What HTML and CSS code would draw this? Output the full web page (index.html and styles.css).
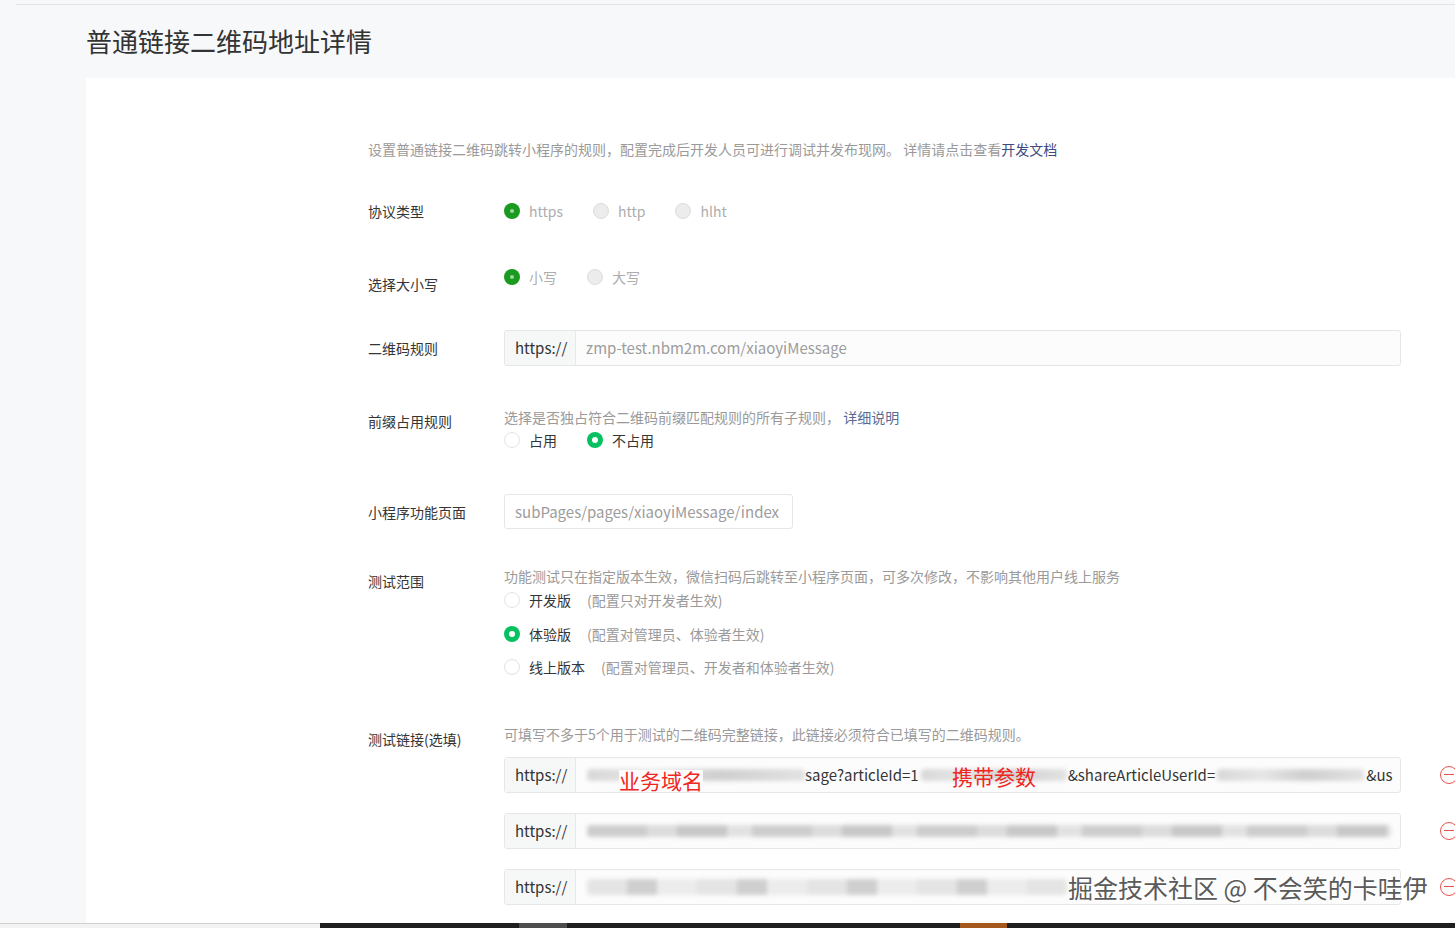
FILE: index.html
```html
<!DOCTYPE html>
<html lang="zh-CN">
<head>
<meta charset="utf-8">
<title>普通链接二维码地址详情</title>
<link rel="stylesheet" href="styles.css">
</head>
<body>
<div class="page">
  <div class="topline"></div>
  <h1 class="title">普通链接二维码地址详情</h1>
  <div class="card">
    <p class="intro">设置普通链接二维码跳转小程序的规则，配置完成后开发人员可进行调试并发布现网。 详情请点击查看<a class="link dark">开发文档</a></p>

    <div class="row row-proto">
      <div class="label">协议类型</div>
      <div class="control radios">
        <span class="radio"><i class="dot on disabled"></i><span class="rtext muted">https</span></span>
        <span class="radio"><i class="dot off disabled"></i><span class="rtext muted">http</span></span>
        <span class="radio"><i class="dot off disabled"></i><span class="rtext muted">hlht</span></span>
      </div>
    </div>

    <div class="row row-case">
      <div class="label lower7">选择大小写</div>
      <div class="control radios">
        <span class="radio"><i class="dot on disabled"></i><span class="rtext muted">小写</span></span>
        <span class="radio"><i class="dot off disabled"></i><span class="rtext muted">大写</span></span>
      </div>
    </div>

    <div class="row row-rule">
      <div class="label input-label">二维码规则</div>
      <div class="control">
        <div class="input wide">
          <span class="prefix">https://</span>
          <span class="value ph">zmp-test.nbm2m.com/xiaoyiMessage</span>
        </div>
      </div>
    </div>

    <div class="row row-prefix">
      <div class="label lower4">前缀占用规则</div>
      <div class="control">
        <div class="hint">选择是否独占符合二维码前缀匹配规则的所有子规则， <a class="link">详细说明</a></div>
        <div class="radios tight">
          <span class="radio"><i class="dot off"></i><span class="rtext">占用</span></span>
          <span class="radio"><i class="dot on"></i><span class="rtext">不占用</span></span>
        </div>
      </div>
    </div>

    <div class="row row-page">
      <div class="label input-label">小程序功能页面</div>
      <div class="control">
        <div class="input narrow">
          <span class="value ph">subPages/pages/xiaoyiMessage/index</span>
        </div>
      </div>
    </div>

    <div class="row row-scope">
      <div class="label lower5">测试范围</div>
      <div class="control">
        <div class="hint">功能测试只在指定版本生效，微信扫码后跳转至小程序页面，可多次修改，不影响其他用户线上服务</div>
        <div class="vlist">
          <span class="radio r1"><i class="dot off"></i><span class="rtext">开发版</span><span class="note">(配置只对开发者生效)</span></span>
          <span class="radio r2"><i class="dot on"></i><span class="rtext">体验版</span><span class="note">(配置对管理员、体验者生效)</span></span>
          <span class="radio r3"><i class="dot off"></i><span class="rtext">线上版本</span><span class="note">(配置对管理员、开发者和体验者生效)</span></span>
        </div>
      </div>
    </div>

    <div class="row row-links">
      <div class="label lower5">测试链接(选填)</div>
      <div class="control">
        <div class="hint">可填写不多于5个用于测试的二维码完整链接，此链接必须符合已填写的二维码规则。</div>
        <div class="linkrow first">
          <div class="input wide vis">
            <span class="prefix">https://</span>
            <span class="value mixed vis">
              <span class="blur b1"></span><span class="red r-domain">业务域名</span><span class="txt">sage?articleId=1</span><span class="blur b2"></span><span class="red r-param">携带参数</span><span class="txt">&amp;shareArticleUserId=</span><span class="blur b4"></span><span class="txt">&amp;us</span>
            </span>
          </div>
          <span class="minus"></span>
        </div>
        <div class="linkrow">
          <div class="input wide">
            <span class="prefix">https://</span>
            <span class="value mixed"><span class="blur b5"></span></span>
          </div>
          <span class="minus"></span>
        </div>
        <div class="linkrow">
          <div class="input wide">
            <span class="prefix">https://</span>
            <span class="value mixed"><span class="blur b6"></span></span>
          </div>
          <span class="minus"></span>
        </div>
      </div>
    </div>
    <div class="watermark">掘金技术社区 @ 不会笑的卡哇伊</div>
  </div>
  <div class="bottombar">
    <div class="bb-left"></div>
    <div class="bb-right"><span class="seg gray"></span><span class="seg orange"></span></div>
  </div>
</div>
</body>
</html>
```

FILE: styles.css
```css
html, body {
  margin: 0;
  padding: 0;
  overflow: hidden;
}
body {
  background: #f7f8fa;
  font-family: "Noto Sans CJK SC", "Noto Sans", sans-serif;
  color: #353535;
}
.page {
  width: 1455px;
  height: 928px;
  display: flex;
  flex-direction: column;
  overflow: hidden;
}
.topline {
  margin-top: 4px;
  margin-left: 16px;
  height: 0;
  border-top: 1px solid #e4e4e4;
}
.title {
  margin: 0;
  padding: 18px 0 0 86px;
  height: 55px;
  font-size: 26px;
  line-height: 36px;
  font-weight: normal;
  color: #333;
}
.card {
  position: relative;
  flex: 1;
  margin-left: 86px;
  background: #fff;
  padding: 61px 0 0 282px;
  font-size: 14px;
  line-height: 20px;
}
.intro {
  margin: 0;
  color: #9a9a9a;
}
.link {
  color: #576b95;
  cursor: pointer;
}
.link.dark { color: #3d4a80; }

.row {
  display: flex;
  align-items: flex-start;
}
.label {
  width: 136px;
  flex: none;
  color: #353535;
}
.lower7 { padding-top: 7px; }
.lower4 { padding-top: 4px; }
.lower5 { padding-top: 5px; }
.input-label { padding-top: 8px; }

.row-proto { margin-top: 42px; }
.row-case { margin-top: 46px; }
.row-rule { margin-top: 36px; }
.row-prefix { margin-top: 41px; }
.row-page { margin-top: 44px; }
.row-scope { margin-top: 37px; }
.row-links { margin-top: 47px; }

.radios {
  display: flex;
  align-items: center;
  height: 20px;
}
.radios.tight { margin-top: 3px; }
.radio {
  display: inline-flex;
  align-items: center;
  height: 20px;
  margin-right: 30px;
}
.dot {
  width: 16px;
  height: 16px;
  box-sizing: border-box;
  border-radius: 50%;
  margin-right: 9px;
  position: relative;
  flex: none;
}
.dot.off {
  border: 1px solid #e2e2e2;
  background: #fff;
}
.dot.off.disabled {
  background: #ececec;
  border-color: #dcdcdc;
}
.dot.on {
  background: #1aad19;
}
.dot.on::after {
  content: "";
  position: absolute;
  left: 5px;
  top: 5px;
  width: 6px;
  height: 6px;
  border-radius: 50%;
  background: #fff;
}
.dot.on.disabled { background: #1a9a1e; }
.dot.on.disabled::after {
  left: 6px;
  top: 6px;
  width: 4px;
  height: 4px;
  background: #9fd49f;
}
.row-prefix .dot.on, .row-scope .dot.on { background: #07c160; }
.rtext { color: #353535; }
.rtext.muted { color: #adadad; }
.note {
  margin-left: 16px;
  color: #9a9a9a;
}
.hint { color: #9a9a9a; }

.vlist {
  display: flex;
  flex-direction: column;
}
.vlist .r1 { margin-top: 4px; }
.vlist .r2 { margin-top: 14px; }
.vlist .r3 { margin-top: 13px; }

.input {
  display: flex;
  align-items: stretch;
  box-sizing: border-box;
  border: 1px solid #e6e6e6;
  border-radius: 3px;
  background: #fff;
  overflow: hidden;
  font-size: 15px;
}
.input.wide {
  width: 897px;
  height: 36px;
  background: #fcfcfc;
}
.input.narrow {
  width: 289px;
  height: 35px;
}
.prefix {
  flex: none;
  width: 71px;
  box-sizing: border-box;
  padding-left: 10px;
  display: flex;
  align-items: center;
  background: #f6f7f7;
  border-right: 1px solid #e8e8e8;
  color: #333;
}
.value {
  display: flex;
  align-items: center;
  padding-left: 10px;
  white-space: nowrap;
  overflow: hidden;
  flex: 1;
}
.ph { color: #9c9c9c; }
.mixed {
  padding-left: 11px;
  padding-right: 8px;
  color: #353535;
  position: relative;
}
.input.vis, .value.vis { overflow: visible; }
.txt { flex: none; }
.blur {
  flex: none;
  height: 12px;
  border-radius: 4px;
  filter: blur(2px);
  background: linear-gradient(90deg, #d8d8d8, #e6e6e6 30%, #cfcfcf 60%, #e2e2e2);
}
.b1 { width: 218px; }
.b2 { width: 146px; margin-left: 2px; margin-right: 1px; }
.b4 { width: 147px; margin-left: 2px; margin-right: 2px; }
.b5 {
  width: 804px;
  background: repeating-linear-gradient(90deg, #cdcdcd 0 60px, #dcdcdc 60px 90px, #c8c8c8 90px 140px, #e2e2e2 140px 165px);
}
.b6 {
  width: 480px;
  height: 16px;
  background: repeating-linear-gradient(90deg, #e4e4e4 0 40px, #cfcfcf 40px 70px, #ececec 70px 110px);
}
.red {
  position: absolute;
  color: #f0271f;
  font-size: 21px;
  line-height: 21px;
  background: #fcfcfc;
}
.r-domain { left: 43px; top: 12px; }
.r-param { left: 376px; top: 8px; background: transparent; }

.linkrow {
  display: flex;
  align-items: center;
}
.linkrow.first { margin-top: 13px; }
.linkrow + .linkrow { margin-top: 20px; }
.minus {
  flex: none;
  margin-left: 39px;
  width: 18px;
  height: 18px;
  box-sizing: border-box;
  border: 1.5px solid #e9514f;
  border-radius: 50%;
  position: relative;
}
.minus::after {
  content: "";
  position: absolute;
  left: 3px;
  right: 3px;
  top: 6.5px;
  height: 1.5px;
  background: #e9514f;
}

.watermark {
  position: absolute;
  left: 982px;
  top: 794px;
  font-size: 25px;
  line-height: 30px;
  color: #5a5a5a;
  text-shadow: 1px 1px 0 #fff, -1px -1px 0 #fff, 1px -1px 0 #fff, -1px 1px 0 #fff;
  white-space: nowrap;
}

.bottombar {
  flex: none;
  height: 5px;
  display: flex;
}
.bb-left {
  width: 320px;
  box-sizing: border-box;
  border-top: 1px solid #cfcfcf;
  background: #f3f3f3;
}
.bb-right {
  flex: 1;
  background: #1f1f1f;
  position: relative;
  display: flex;
}
.seg {
  height: 5px;
}
.seg.gray {
  margin-left: 199px;
  width: 48px;
  background: #4d4d4d;
}
.seg.orange {
  margin-left: 393px;
  width: 47px;
  background: #a5581c;
}
```
